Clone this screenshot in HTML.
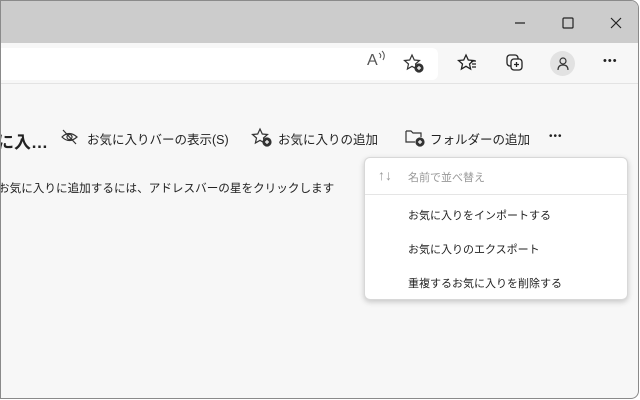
<!DOCTYPE html>
<html><head><meta charset="utf-8"><style>
*{margin:0;padding:0;box-sizing:border-box}
body{width:640px;height:400px;background:#fff;font-family:"Liberation Sans","Noto Sans CJK JP",sans-serif;position:relative;overflow:hidden}
.win{position:absolute;left:0;top:0;width:639px;height:399px;border:1px solid #8a8a8a;border-radius:0 8px 8px 0;overflow:hidden;background:#f7f7f7}
.title{position:absolute;left:0;top:0;right:0;height:42px;background:#cccccc}
.tool{position:absolute;left:0;top:42px;right:0;height:41px;background:#f7f7f7;border-bottom:1px solid #e3e3e3}
.addr{position:absolute;left:-6px;top:5px;width:443px;height:32px;background:#fff;border-radius:6px}
.abs{position:absolute}
.t{position:absolute;font-size:12.5px;color:#222;white-space:nowrap}
.menu{position:absolute;left:363px;top:156px;width:264px;height:143px;background:#fff;border:1px solid #d8d8d8;border-radius:6px;box-shadow:0 2px 6px rgba(0,0,0,.2)}
.mi{position:absolute;left:43px;font-size:11px;color:#222;white-space:nowrap}
</style></head><body>
<div class="win">
<div class="title"></div>
<svg class="abs" style="left:512px;top:15px" width="110" height="14" stroke="#222" stroke-width="1.2" fill="none">
<line x1="2" y1="7" x2="12" y2="7"/>
<rect x="50" y="2" width="10" height="10" rx="1"/>
<path d="M98 2 L108 12 M108 2 L98 12"/>
</svg>
<div class="tool">
<div class="addr"></div>
<div class="t" style="left:366px;top:9px;font-size:16px;color:#555">A</div>
<svg class="abs" style="left:376px;top:7px" width="10" height="12" stroke="#555" fill="none" stroke-width="1"><path d="M2 3 Q5 5 3 8 M5 1 Q9 5 6 10"/></svg>
<svg class="abs" style="left:402px;top:10px" width="22" height="20" fill="none" stroke="#333" stroke-width="1.2"><path d="M9 2 L11.3 7 16.5 7.5 12.5 11 13.6 16 9 13.3 4.4 16 5.5 11 1.5 7.5 6.7 7Z"/><circle cx="16" cy="15" r="4" fill="#333"/><path d="M16 13v4M14 15h4" stroke="#fff"/></svg>
<svg class="abs" style="left:456px;top:10px" width="22" height="20" fill="none" stroke="#222" stroke-width="1.3"><path d="M9 2 L11.3 7 16.5 7.5 12.5 11 13.6 16 9 13.3 4.4 16 5.5 11 1.5 7.5 6.7 7Z"/><path d="M14 8h5M15 11h4M15 14h4"/></svg>
<svg class="abs" style="left:503px;top:9px" width="22" height="22" fill="none" stroke="#222" stroke-width="1.3"><rect x="3" y="3" width="11" height="11" rx="3"/><rect x="7" y="7" width="11" height="11" rx="3" fill="#f7f7f7"/><path d="M12.5 10v5M10 12.5h5"/></svg>
<div class="abs" style="left:549px;top:8px;width:25px;height:25px;border-radius:50%;background:#e2e2e2"></div>
<svg class="abs" style="left:554px;top:13px" width="16" height="16" fill="none" stroke="#333" stroke-width="1.2"><circle cx="8" cy="5" r="3"/><path d="M3 14 Q3 9 8 9 Q13 9 13 14"/></svg>
<div class="t" style="left:602px;top:12px;font-size:11px;letter-spacing:1px">•••</div>
</div>
<div class="t" style="left:-4px;top:127px;font-size:17px;font-weight:bold">に入…</div>
<svg class="abs" style="left:60px;top:128px" width="18" height="16" fill="none" stroke="#333" stroke-width="1.2"><path d="M1 8 Q8 1 16 8 Q8 15 1 8Z"/><circle cx="8.5" cy="8" r="2.5"/><path d="M2 1 L15 15"/></svg>
<div class="t" style="left:86px;top:128px">お気に入りバーの表示(S)</div>
<svg class="abs" style="left:250px;top:126px" width="22" height="20" fill="none" stroke="#333" stroke-width="1.2"><path d="M9 2 L11.3 7 16.5 7.5 12.5 11 13.6 16 9 13.3 4.4 16 5.5 11 1.5 7.5 6.7 7Z"/><circle cx="16" cy="15" r="4" fill="#333"/><path d="M16 13v4M14 15h4" stroke="#fff"/></svg>
<div class="t" style="left:277px;top:128px">お気に入りの追加</div>
<svg class="abs" style="left:403px;top:126px" width="22" height="20" fill="none" stroke="#333" stroke-width="1.2"><path d="M2 4 h5 l2 2 h8 v4 M2 4 v11 h9"/><circle cx="16" cy="15" r="4" fill="#333"/><path d="M16 13v4M14 15h4" stroke="#fff"/></svg>
<div class="t" style="left:429px;top:128px">フォルダーの追加</div>
<div class="t" style="left:548px;top:130px;font-size:10px;letter-spacing:1px">•••</div>
<div class="t" style="left:-3px;top:179px;font-size:11.6px">お気に入りに追加するには、アドレスバーの星をクリックします</div>
<div class="menu">
<div class="abs" style="left:0;right:0;top:36px;border-top:1px solid #e5e5e5"></div>
<div class="mi" style="left:13px;top:9px;color:#999;font-size:14px">↑↓</div>
<div class="mi" style="top:11px;color:#999">名前で並べ替え</div>
<div class="mi" style="top:49px">お気に入りをインポートする</div>
<div class="mi" style="top:83px">お気に入りのエクスポート</div>
<div class="mi" style="top:117px">重複するお気に入りを削除する</div>
</div>
</div>
</body></html>
